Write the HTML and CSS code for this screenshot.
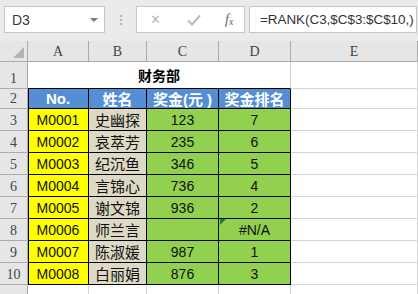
FILE: index.html
```html
<!DOCTYPE html>
<html lang="zh-CN">
<head>
    <meta charset="UTF-8">
    <title>财务部 - 奖金排名</title>
    <link rel="stylesheet" href="styles.css">
</head>
<body>

    <div class="toolbar">
        <div class="name-box">
            <span>D3</span>
            <span class="drop"></span>
        </div>
        <div class="dots">
            <i></i><i></i><i></i>
        </div>
        <div class="func-box">
            <span class="btn-x">&#x2715;</span>
            <svg class="btn-ok" width="14" height="12" viewBox="0 0 14 12">
                <path d="M1 6.5 L5 10.5 L13 1.5" fill="none" stroke="#b9b9b9" stroke-width="2"/>
            </svg>
            <span class="fx">f<sub>x</sub></span>
        </div>
        <div class="formula">=RANK(C3,$C$3:$C$10,)</div>
    </div>

    <div class="sheet">
        <!-- column headers -->
        <div class="corner"><span class="tri"></span></div>
        <div class="col-head">A</div>
        <div class="col-head">B</div>
        <div class="col-head">C</div>
        <div class="col-head">D</div>
        <div class="col-head">E</div>

        <!-- row 1 -->
        <div class="row-head tall">1</div>
        <div class="title">财务部</div>
        <div class="empty"></div>

        <!-- row 2 -->
        <div class="row-head">2</div>
        <div class="cell th first">No.</div>
        <div class="cell th">姓名</div>
        <div class="cell th">奖金(元 )</div>
        <div class="cell th">奖金排名</div>
        <div class="empty"></div>
    </div>

    <script>
        const rows = [
            ["M0001", "史幽探", "123", "7"],
            ["M0002", "哀萃芳", "235", "6"],
            ["M0003", "纪沉鱼", "346", "5"],
            ["M0004", "言锦心", "736", "4"],
            ["M0005", "谢文锦", "936", "2"],
            ["M0006", "师兰言", "", "#N/A"],
            ["M0007", "陈淑媛", "987", "1"],
            ["M0008", "白丽娟", "876", "3"]
        ];

        const sheet = document.querySelector(".sheet");

        function add(cls, text) {
            const el = document.createElement("div");
            el.className = cls;
            el.textContent = text;
            sheet.appendChild(el);
            return el;
        }

        rows.forEach((r, i) => {
            add("row-head", i + 3);
            add("cell code first", r[0]);
            add("cell name", r[1]);
            add("cell num", r[2]);
            const rank = add("cell num", r[3]);
            if (r[3] === "#N/A") {
                const flag = document.createElement("span");
                flag.className = "err-flag";
                rank.appendChild(flag);
            }
            add("empty", "");
        });

        // partial row at the bottom, its number is below the fold
        add("row-head", "");
        for (let i = 0; i < 5; i++) add("empty", "");
    </script>
</body>
</html>
```

FILE: styles.css
```css
body {
    margin: 0;
    background-color: #fff;
    font-family: "Liberation Sans", Arial, "Noto Sans CJK SC", sans-serif;
    overflow: hidden;
}

/* formula bar */
.toolbar {
    height: 41px;
    background-color: #ebebeb;
    display: flex;
    align-items: flex-start;
    padding: 6px 0 0 4px;
    box-sizing: border-box;
}

.name-box {
    width: 101px;
    height: 27px;
    box-sizing: border-box;
    background-color: #fff;
    border: 1px solid #c6c6c6;
    display: flex;
    align-items: center;
    justify-content: space-between;
    padding: 0 6px 0 7px;
    font-size: 14px;
    color: #3a3a3a;
}

.drop {
    width: 0;
    height: 0;
    border-left: 4px solid transparent;
    border-right: 4px solid transparent;
    border-top: 4px solid #7a7a7a;
}

.dots {
    width: 31px;
    height: 27px;
    display: flex;
    flex-direction: column;
    align-items: center;
    justify-content: center;
    gap: 2px;
}

.dots i {
    width: 2px;
    height: 2px;
    background-color: #b5b5b5;
}

.func-box {
    width: 109px;
    height: 27px;
    box-sizing: border-box;
    background-color: #fff;
    border: 1px solid #c6c6c6;
    display: flex;
    align-items: center;
    padding-left: 13px;
}

.btn-x {
    color: #b9b9b9;
    font-size: 13px;
    width: 37px;
}

.btn-ok {
    margin-right: 24px;
}

.fx {
    font-family: "Liberation Serif", serif;
    font-style: italic;
    font-size: 14px;
    color: #666;
}

.fx sub {
    font-size: 10px;
    vertical-align: -1px;
}

.formula {
    flex: 1;
    height: 27px;
    box-sizing: border-box;
    margin: 0 1px 0 4px;
    background-color: #fff;
    border: 1px solid #c6c6c6;
    font-size: 13.4px;
    line-height: 25px;
    padding-left: 10px;
    color: #333;
    white-space: nowrap;
    overflow: hidden;
}

/* sheet grid */
.sheet {
    display: grid;
    grid-template-columns: 28px 61px 58px 72px 72px 1fr;
    grid-template-rows: 21px 27px 20px repeat(8, 22px) 22px;
}

.sheet > div {
    box-sizing: border-box;
    border-right: 1px solid #d4d4d4;
    border-bottom: 1px solid #d4d4d4;
}

.corner,
.col-head,
.row-head {
    background-color: #e6e6e6;
    color: #444;
    font-family: "Liberation Serif", serif;
    font-size: 14px;
}

.sheet > .corner,
.sheet > .col-head,
.sheet > .row-head {
    border-color: #ababab;
}

.corner {
    position: relative;
}

.tri {
    position: absolute;
    right: 3px;
    bottom: 3px;
    width: 0;
    height: 0;
    border-left: 11px solid transparent;
    border-bottom: 11px solid #b4b4b4;
}

.col-head {
    display: flex;
    align-items: flex-end;
    justify-content: center;
    padding-bottom: 1px;
}

.sheet > .col-head:last-child {
    border-right: none;
}

.row-head {
    display: flex;
    align-items: flex-end;
    justify-content: center;
    padding-bottom: 1px;
}

.title {
    grid-column: 2 / 6;
    display: flex;
    align-items: center;
    justify-content: center;
    font-family: "Noto Sans CJK SC", sans-serif;
    font-weight: bold;
    font-size: 14px;
    color: #000;
}

.sheet > .title {
    border-bottom: 1px solid #000;
    border-right: 1px solid #d4d4d4;
}

.cell {
    display: flex;
    align-items: center;
    justify-content: center;
    font-size: 14px;
    color: #111;
    position: relative;
}

.sheet > .cell {
    border-right: 1px solid #000;
    border-bottom: 1px solid #000;
}

.first {
    box-shadow: inset 1px 0 0 #000;
}

.th {
    background-color: #558ed5;
    color: #fff;
    font-weight: bold;
    font-size: 15px;
    font-family: "Liberation Sans", Arial, "Noto Sans CJK SC", sans-serif;
}

.code {
    background-color: #ffff00;
}

.name {
    background-color: #ddd9c4;
    font-size: 15px;
    font-family: "Noto Sans CJK SC", sans-serif;
}

.num {
    background-color: #92d050;
}

.err-flag {
    position: absolute;
    left: 1px;
    top: 0;
    width: 0;
    height: 0;
    border-top: 6px solid #217a3c;
    border-right: 6px solid transparent;
}
```
